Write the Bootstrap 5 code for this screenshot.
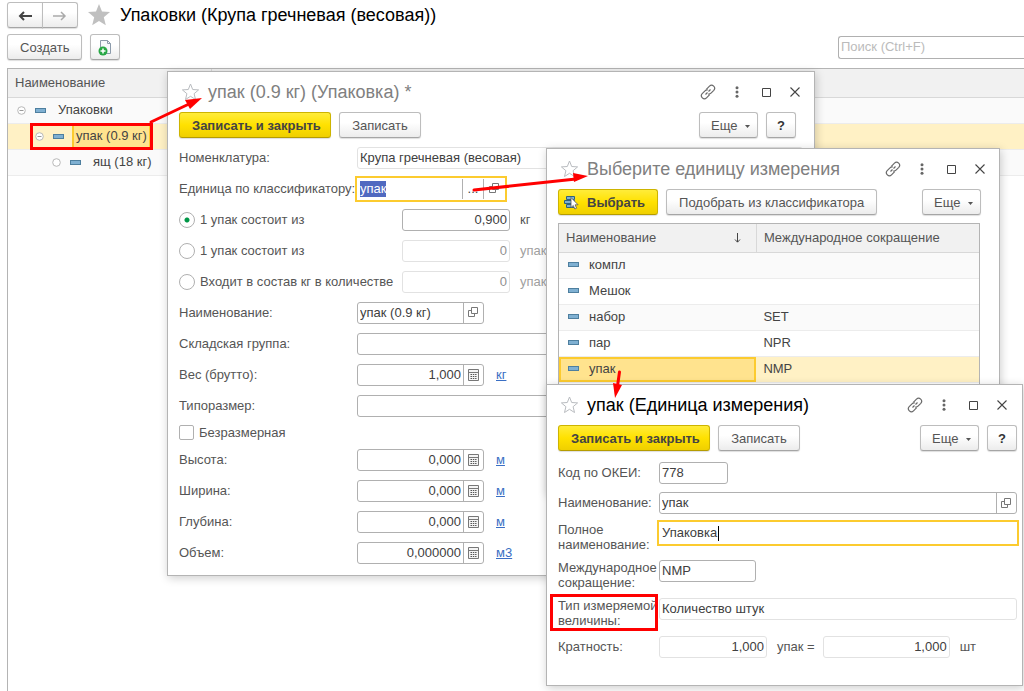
<!DOCTYPE html>
<html lang="ru">
<head>
<meta charset="utf-8">
<meta name="viewport" content="width=device-width, initial-scale=1">
<title>Упаковки (Крупа гречневая (весовая))</title>
<link href="https://cdn.jsdelivr.net/npm/bootstrap@5.3.0/dist/css/bootstrap.min.css" rel="stylesheet">
<style>
  body { font-family: "Liberation Sans", Arial, sans-serif; font-size: 13px; line-height: 22px; color: #555; background: #fff; }
  .desk { min-height: 100vh; }
  .bar { padding-left: 7px; }
  .bar-top { padding-top: 2px; }
  .bar-cmd { margin-top: 6px; }
  .heading { font-size: 18px; line-height: 24px; margin: 0; font-weight: 400; white-space: nowrap; }
  .heading-dim { color: #808080; }

  /* buttons */
  .btn-app { --bs-btn-padding-x: 12px; --bs-btn-padding-y: 0; --bs-btn-font-size: 13px; --bs-btn-line-height: 23px; --bs-btn-border-radius: 3px;
    --bs-btn-color: #555; --bs-btn-border-color: #bdbdbd; --bs-btn-hover-color: #333; --bs-btn-hover-border-color: #999;
    height: 26px; white-space: nowrap; background: linear-gradient(#fff 40%, #ececec); border-bottom-color: #a5a5a5; box-shadow: 0 1px 1px #0002; }
  .btn-main { --bs-btn-color: #444; --bs-btn-border-color: #cdb400; --bs-btn-font-weight: 700; background: linear-gradient(#ffec3a, #ffe100 50%, #efcf00); border-bottom-color: #b59c00; }
  .btn-q { width: 30px; padding: 0; font-weight: 700; color: #333; }
  .btn-more { width: 59px; padding: 0 0 0 4px; }
  .btn-more svg { margin-left: 4px; }
  .nav-pair .btn { width: 36px; padding: 0; }
  .btn-sq { width: 30px; padding: 0; }
  .btn-ico { width: 22px; height: 22px; padding: 0; border: 0; background: none; display: grid; place-items: center; }
  .btn-wide { width: 152px; }
  .btn-mid { width: 82px; }

  /* fields */
  .field { display: flex; height: 22px; border: 1px solid #b0b0b0; border-radius: 3px; background: #fff; min-width: 0; position: relative; }
  .field input { flex: 1 1 0; min-width: 0; width: 100%; height: 16px; align-self: center; border: 0; padding: 0 2px; outline: 0; background: none; color: #404040; line-height: 16px; }
  .field button { flex: none; width: 20px; border: 0; border-left: 1px solid #b0b0b0; background: none; padding: 0; display: grid; place-items: center; color: #444; line-height: 14px; }
  .field-ro { border-color: #e2e2e2; }
  .field-off { border-color: #e2e2e2; }
  .field-off input { color: #909090; }
  .field-hot { border-color: #fff; border-radius: 0; box-shadow: 0 0 0 2px #fccb2f; }
  .field-hot button { width: 21px; }
  .field input::selection { background: #5069c0; color: #fff; }
  .w-code { width: 69px; } .w-abbr { width: 97px; } .w-num { width: 108px; } .w-combo { width: 127px; } .w-pick { width: 148px; } .w-rate { width: 127px; }
  .caret { position: absolute; left: 58px; top: 3px; width: 1px; height: 15px; background: #000; }

  /* windows on the desktop */
  .win { position: absolute; background: #fff; border: 1px solid #b4b4b4; box-shadow: 1px 2px 9px #0003; overflow: hidden; }
  .win-pack { left: 167px; top: 71px; width: 648px; padding-bottom: 7px; }
  .win-pick { left: 546px; top: 148px; width: 454px; padding-bottom: 12px; }
  .win-unit { left: 546px; top: 384px; width: 477px; padding-bottom: 27px; }
  .win-title { display: flex; align-items: center; height: 40px; padding: 0 8px 0 13px; }
  .win-title .heading { margin-left: 8px; }
  .win-tools { display: flex; gap: 8px; padding: 0 18px 0 11px; }
  .win-unit .win-title { padding-right: 9px; }
  .win-unit .win-tools { padding: 0 5px 0 11px; }
  .win-ctl { display: flex; gap: 7px; margin-left: auto; }

  .form-pack { padding: 4px 11px 0 11px; }
  .form-line { display: flex; align-items: center; height: 31px; white-space: nowrap; }
  .form-line.tick-line { height: 23px; }
  .lab { flex: none; width: 178px; }
  .lab-opt { flex: none; width: 223px; display: flex; align-items: center; gap: 5px; }
  .unit { margin-left: 10px; }
  .unit-off { color: #a0a0a0; }
  a.unit { margin-left: 12px; color: #3a6fc4; }
  .opt { appearance: none; width: 16px; height: 16px; margin: 0; border: 1px solid #b0b0b0; border-radius: 50%; background: #fff; flex: none; }
  .opt:checked { background: radial-gradient(circle, #009646 0 2px, #fff 3px); }
  .tick { appearance: none; width: 15px; height: 15px; margin: 0; border: 1px solid #b0b0b0; border-radius: 2px; background: #fff; }

  .form-unit { display: grid; grid-template-columns: 101px 1fr; row-gap: 8px; padding: 11px 5px 0 11px; align-items: start; }
  .form-unit label { white-space: nowrap; }
  .two { line-height: 15px; height: 30px; position: relative; }
  .mark-box { position: absolute; border: 3px solid #f00; pointer-events: none; }
  .two .mark-box { inset: -4px 1px -3px -8px; }

  /* lists */
  .grid-list { border-collapse: collapse; width: 100%; table-layout: fixed; }
  .grid-list th { font-weight: 400; height: 28px; background: #f1f1f1; border-bottom: 1px solid #d8d8d8; padding: 0 7px; }
  .grid-list td { height: 26px; border-bottom: 1px solid #ececec; padding: 0 7px; color: #444; }
  .grid-list th + th { border-left: 1px solid #d8d8d8; }
  .grid-list th, .grid-list td { line-height: 20px; }
  .grid-list tbody tr:nth-child(odd) { background: #fafafa; }
  .grid-list tbody tr.sel { background: #fff1c5; }
  .grid-list td.cur { background: #ffe38e; box-shadow: inset 0 0 0 2px #fccb2f; }
  .list-frame { border: 1px solid #b4b4b4; }
  .pick-frame { margin: 8px 19px 0 11px; min-height: 258px; }
  .main-frame { margin: 8px 0 0 7px; border-right: 0; border-bottom: 0; }
  .dash { display: inline-block; width: 11px; height: 5px; border: 1px solid #4e7f9f; background: #7fb0d2; flex: none; }
  .pick-frame .dash { margin: 0 10px 2px 2px; }
  .node { display: flex; align-items: center; height: 25px; position: relative; }
  .node svg { flex: none; margin-right: 9px; }
  .node-text { margin-left: 12px; }
  .node-1 { padding-left: 2px; } .node-2 { padding-left: 20px; } .node-3 { padding-left: 37px; }
  .node-cur { background: #ffe38e; box-shadow: inset 0 0 0 2px #fccb2f; height: 25px; margin-left: 8px; padding: 2px 4px; }
  .node .mark-box { left: 15px; top: -1px; width: 123px; height: 27px; }
  .search { width: 186px; height: 23px; border-right: 0; border-radius: 3px 0 0 3px; }
  .search input::placeholder { color: #bbb; opacity: 1; }
  .arrows { position: absolute; left: 0; top: 0; pointer-events: none; }
</style>
</head>
<body>
<svg width="0" height="0" class="position-absolute" aria-hidden="true">
  <defs>
    <symbol id="star" viewBox="0 0 18 18"><path d="M9 1l2.200 5.500 5.900.4-4.500 3.800 1.400 5.800L9 13.300l-5 3.200 1.400-5.800L.9 6.900l5.900-.4z" fill="#fff" stroke="#b9bcc0"/></symbol>
    <symbol id="link" viewBox="0 0 16 16"><g fill="none" stroke="#6a6a6a" stroke-width="1.200"><path d="M6.300 5.300l3.200-3.200c2.700-2.600 6.900 1.300 4.300 4.200L11 9.200c-.8.800-1.800 1-2.800.8"/><path d="M9.700 10.700l-3.200 3.200c-2.700 2.600-6.900-1.300-4.300-4.200L5 6.800c.8-.8 1.800-1 2.800-.8"/><path d="M5.500 10.500l2-2m1-1l2-2"/></g></symbol>
    <symbol id="dots" viewBox="0 0 4 12"><g fill="#666"><circle cx="2" cy="1.700" r="1.500"/><circle cx="2" cy="6" r="1.500"/><circle cx="2" cy="10.300" r="1.500"/></g></symbol>
    <symbol id="maxi" viewBox="0 0 9 9"><path d="M.5.500h8v8h-8z" fill="none" stroke="#444"/></symbol>
    <symbol id="close" viewBox="0 0 10 10"><path d="M.5.500l9 9m0-9l-9 9" stroke="#444" stroke-width="1.100"/></symbol>
    <symbol id="down" viewBox="0 0 5 3"><path d="M0 0h5L2.500 3z" fill="#555"/></symbol>
    <symbol id="open" viewBox="0 0 11 11"><g fill="#fff" stroke="#777"><path d="M.5 3.500h6v6h-6z"/><path d="M3.500.500h6v6h-6z"/></g></symbol>
    <symbol id="calc" viewBox="0 0 11 12"><path d="M.5.500h10v11H.5z" fill="#f4f4f4" stroke="#777"/><path d="M1 3.500h9" stroke="#777"/><path d="M2.500 5.500h6M2.500 7.500h6M2.500 9.500h6" stroke="#555" stroke-dasharray="1.500 .8"/></symbol>
    <symbol id="minus" viewBox="0 0 9 9"><circle cx="4.500" cy="4.500" r="3.800" fill="#fff" stroke="#b8b8b8"/><path d="M2.500 4.500h4" stroke="#999"/></symbol>
    <symbol id="ring" viewBox="0 0 9 9"><circle cx="4.500" cy="4.500" r="3.800" fill="#fff" stroke="#b8b8b8"/></symbol>
  </defs>
</svg>

<div class="desk position-relative overflow-hidden d-flex flex-column">
  <header class="bar bar-top d-flex align-items-center">
    <div class="btn-group nav-pair">
      <button class="btn btn-app" aria-label="Назад"><svg width="14" height="10" viewBox="0 0 14 10"><path d="M14 5H3M6 1L2 5l4 4" fill="none" stroke="#444" stroke-width="2"/></svg></button>
      <button class="btn btn-app" aria-label="Вперед"><svg width="14" height="10" viewBox="0 0 14 10"><path d="M0 5h11M8 1l4 4-4 4" fill="none" stroke="#aaa" stroke-width="1.500"/></svg></button>
    </div>
    <svg class="ms-2 me-2" width="26" height="22" viewBox="0 0 24 22"><path d="M12 0l3 7.600 8 .5-6.200 5.200 2 8L12 17l-6.800 4.300 2-8L1 8.100l8-.5z" fill="#c0c0c0"/></svg>
    <h1 class="heading text-black">Упаковки (Крупа гречневая (весовая))</h1>
  </header>
  <div class="bar bar-cmd d-flex align-items-center gap-2">
    <button class="btn btn-app">Создать</button>
    <button class="btn btn-app btn-sq" aria-label="Создать копированием"><svg width="14" height="16" viewBox="0 0 14 16"><path d="M2.500.500h7l3 3v10h-10z" fill="#f5f8fb" stroke="#8c9bab"/><path d="M9.500.500v3h3" fill="none" stroke="#8c9bab"/><circle cx="5" cy="11" r="4.500" fill="#28a745"/><path d="M5 8.500v5M2.500 11h5" stroke="#fff" stroke-width="1.500"/></svg></button>
    <div class="field search ms-auto"><input type="search" aria-label="Поиск" placeholder="Поиск (Ctrl+F)"></div>
  </div>

  <main class="list-frame main-frame flex-grow-1">
    <table class="grid-list">
      <thead><tr><th style="width:20%">Наименование</th><th></th></tr></thead>
      <tbody>
        <tr><td colspan="2"><div class="node node-1"><svg width="9" height="9"><use href="#minus"/></svg><span class="dash"></span><span class="node-text">Упаковки</span></div></td></tr>
        <tr class="sel"><td colspan="2"><div class="node node-2"><svg width="9" height="9"><use href="#minus"/></svg><span class="dash"></span><span class="node-cur">упак (0.9 кг)</span><span class="mark-box"></span></div></td></tr>
        <tr><td colspan="2"><div class="node node-3"><svg width="9" height="9"><use href="#ring"/></svg><span class="dash"></span><span class="node-text">ящ (18 кг)</span></div></td></tr>
      </tbody>
    </table>
  </main>

  <section class="win win-pack">
    <div class="win-title">
      <svg width="19" height="18"><use href="#star"/></svg>
      <h2 class="heading heading-dim">упак (0.9 кг) (Упаковка) *</h2>
      <div class="win-ctl">
        <button class="btn-ico" aria-label="Ссылка"><svg width="16" height="16"><use href="#link"/></svg></button>
        <button class="btn-ico" aria-label="Меню"><svg width="4" height="12"><use href="#dots"/></svg></button>
        <button class="btn-ico" aria-label="Развернуть"><svg width="9" height="9"><use href="#maxi"/></svg></button>
        <button class="btn-ico" aria-label="Закрыть"><svg width="10" height="10"><use href="#close"/></svg></button>
      </div>
    </div>
    <div class="win-tools">
      <button class="btn btn-app btn-main btn-wide">Записать и закрыть</button>
      <button class="btn btn-app btn-mid">Записать</button>
      <button class="btn btn-app btn-more ms-auto">Еще <svg width="5" height="3"><use href="#down"/></svg></button>
      <button class="btn btn-app btn-q">?</button>
    </div>
    <form class="form-pack">
      <div class="form-line"><label class="lab" for="item">Номенклатура:</label><div class="field field-ro flex-grow-1"><input id="item" value="Крупа гречневая (весовая)" readonly></div></div>
      <div class="form-line"><label class="lab" for="cls">Единица по классификатору:</label><div class="field field-hot w-pick"><input id="cls" value="упак"><button type="button" aria-label="Выбрать">...</button><button type="button" aria-label="Открыть"><svg width="11" height="11"><use href="#open"/></svg></button></div></div>
      <div class="form-line"><label class="lab-opt"><input class="opt" type="radio" name="kind" checked>1 упак состоит из</label><div class="field w-num"><input class="text-end" aria-label="Количество кг" value="0,900"></div><span class="unit">кг</span></div>
      <div class="form-line"><label class="lab-opt"><input class="opt" type="radio" name="kind">1 упак состоит из</label><div class="field field-off w-num"><input class="text-end" aria-label="Количество упаковок" value="0" disabled></div><span class="unit unit-off">упак</span></div>
      <div class="form-line"><label class="lab-opt"><input class="opt" type="radio" name="kind">Входит в состав кг в количестве</label><div class="field field-off w-num"><input class="text-end" aria-label="Входит в состав" value="0" disabled></div><span class="unit unit-off">упак</span></div>
      <div class="form-line"><label class="lab" for="nm">Наименование:</label><div class="field w-combo"><input id="nm" value="упак (0.9 кг)"><button type="button" aria-label="Открыть"><svg width="11" height="11"><use href="#open"/></svg></button></div></div>
      <div class="form-line"><label class="lab" for="grp">Складская группа:</label><div class="field flex-grow-1"><input id="grp"></div></div>
      <div class="form-line"><label class="lab" for="wt">Вес (брутто):</label><div class="field w-combo"><input id="wt" class="text-end" value="1,000"><button type="button" aria-label="Калькулятор"><svg width="11" height="12"><use href="#calc"/></svg></button></div><a class="unit" href="#">кг</a></div>
      <div class="form-line"><label class="lab" for="sz">Типоразмер:</label><div class="field flex-grow-1"><input id="sz"></div></div>
      <div class="form-line tick-line"><label class="lab-opt"><input class="tick" type="checkbox">Безразмерная</label></div>
      <div class="form-line"><label class="lab" for="hh">Высота:</label><div class="field w-combo"><input id="hh" class="text-end" value="0,000"><button type="button" aria-label="Калькулятор"><svg width="11" height="12"><use href="#calc"/></svg></button></div><a class="unit" href="#">м</a></div>
      <div class="form-line"><label class="lab" for="ww">Ширина:</label><div class="field w-combo"><input id="ww" class="text-end" value="0,000"><button type="button" aria-label="Калькулятор"><svg width="11" height="12"><use href="#calc"/></svg></button></div><a class="unit" href="#">м</a></div>
      <div class="form-line"><label class="lab" for="dd">Глубина:</label><div class="field w-combo"><input id="dd" class="text-end" value="0,000"><button type="button" aria-label="Калькулятор"><svg width="11" height="12"><use href="#calc"/></svg></button></div><a class="unit" href="#">м</a></div>
      <div class="form-line"><label class="lab" for="vv">Объем:</label><div class="field w-combo"><input id="vv" class="text-end" value="0,000000"><button type="button" aria-label="Калькулятор"><svg width="11" height="12"><use href="#calc"/></svg></button></div><a class="unit" href="#">м3</a></div>
    </form>
  </section>

  <section class="win win-pick">
    <div class="win-title">
      <svg width="19" height="18"><use href="#star"/></svg>
      <h2 class="heading heading-dim">Выберите единицу измерения</h2>
      <div class="win-ctl">
        <button class="btn-ico" aria-label="Ссылка"><svg width="16" height="16"><use href="#link"/></svg></button>
        <button class="btn-ico" aria-label="Меню"><svg width="4" height="12"><use href="#dots"/></svg></button>
        <button class="btn-ico" aria-label="Развернуть"><svg width="9" height="9"><use href="#maxi"/></svg></button>
        <button class="btn-ico" aria-label="Закрыть"><svg width="10" height="10"><use href="#close"/></svg></button>
      </div>
    </div>
    <div class="win-tools">
      <button class="btn btn-app btn-main d-flex align-items-center ps-1 gap-2"><svg width="16" height="15" viewBox="0 0 16 15"><g fill="#7fb0d2" stroke="#2f627f"><path d="M3.500 1.500h8v3h-8z"/><path d="M1.500 5.500h10v3h-10z"/><path d="M3.500 9.500h8v3h-8z"/></g><path d="M8 2.500v10l2.300-2 1.500 3.500 1.800-.8-1.500-3.400h3z" fill="#fff" stroke="#555" stroke-width=".8"/></svg>Выбрать</button>
      <button class="btn btn-app">Подобрать из классификатора</button>
      <button class="btn btn-app btn-more ms-auto">Еще <svg width="5" height="3"><use href="#down"/></svg></button>
    </div>
    <div class="list-frame pick-frame">
      <table class="grid-list">
        <thead><tr><th style="width:47%"><div class="d-flex align-items-center justify-content-between pe-2">Наименование<svg width="7" height="10" viewBox="0 0 7 10"><path d="M3.500 0v9M1 6.500l2.500 2.700L6 6.500" fill="none" stroke="#444"/></svg></div></th><th>Международное сокращение</th></tr></thead>
        <tbody>
          <tr><td><span class="dash"></span>компл</td><td></td></tr>
          <tr><td><span class="dash"></span>Мешок</td><td></td></tr>
          <tr><td><span class="dash"></span>набор</td><td>SET</td></tr>
          <tr><td><span class="dash"></span>пар</td><td>NPR</td></tr>
          <tr class="sel"><td class="cur"><span class="dash"></span>упак</td><td>NMP</td></tr>
        </tbody>
      </table>
    </div>
  </section>

  <section class="win win-unit">
    <div class="win-title">
      <svg width="19" height="18"><use href="#star"/></svg>
      <h2 class="heading text-black">упак (Единица измерения)</h2>
      <div class="win-ctl">
        <button class="btn-ico" aria-label="Ссылка"><svg width="16" height="16"><use href="#link"/></svg></button>
        <button class="btn-ico" aria-label="Меню"><svg width="4" height="12"><use href="#dots"/></svg></button>
        <button class="btn-ico" aria-label="Развернуть"><svg width="9" height="9"><use href="#maxi"/></svg></button>
        <button class="btn-ico" aria-label="Закрыть"><svg width="10" height="10"><use href="#close"/></svg></button>
      </div>
    </div>
    <div class="win-tools">
      <button class="btn btn-app btn-main btn-wide">Записать и закрыть</button>
      <button class="btn btn-app btn-mid">Записать</button>
      <button class="btn btn-app btn-more ms-auto">Еще <svg width="5" height="3"><use href="#down"/></svg></button>
      <button class="btn btn-app btn-q">?</button>
    </div>
    <form class="form-unit">
      <label for="code">Код по ОКЕИ:</label><div class="field w-code"><input id="code" value="778"></div>
      <label for="uname">Наименование:</label><div class="field"><input id="uname" value="упак"><button type="button" aria-label="Открыть"><svg width="11" height="11"><use href="#open"/></svg></button></div>
      <label class="two" for="full">Полное<br>наименование:</label><div class="field field-hot"><input id="full" value="Упаковка"><span class="caret"></span></div>
      <label class="two" for="abbr">Международное<br>сокращение:</label><div class="field w-abbr"><input id="abbr" value="NMP"></div>
      <label class="two" for="kindof">Тип измеряемой<br>величины:<span class="mark-box"></span></label><div class="field field-ro"><input id="kindof" value="Количество штук" readonly></div>
      <label for="r1">Кратность:</label><div class="d-flex"><div class="field field-ro w-num"><input id="r1" class="text-end" value="1,000" readonly></div><span class="unit">упак =</span><div class="field field-ro w-rate ms-2"><input class="text-end" aria-label="Кратность в штуках" value="1,000" readonly></div><span class="unit">шт</span></div>
    </form>
  </section>

  <svg class="arrows" width="640" height="410" viewBox="0 0 640 410" aria-hidden="true">
    <g stroke="#f00" stroke-width="3" stroke-linecap="round"><path d="M151 122l38-18"/><path d="M474 190l102-11"/><path d="M619.500 372l-2 14"/></g>
    <g fill="#f00"><path d="M202 98l-12 11-5-9z"/><path d="M588 176l-14 6-1-9z"/><path d="M615 398l-2-15 9 2z"/></g>
  </svg>
</div>
<script src="https://cdn.jsdelivr.net/npm/bootstrap@5.3.0/dist/js/bootstrap.bundle.min.js"></script>
<script>document.getElementById('cls').select();</script>
</body>
</html>
